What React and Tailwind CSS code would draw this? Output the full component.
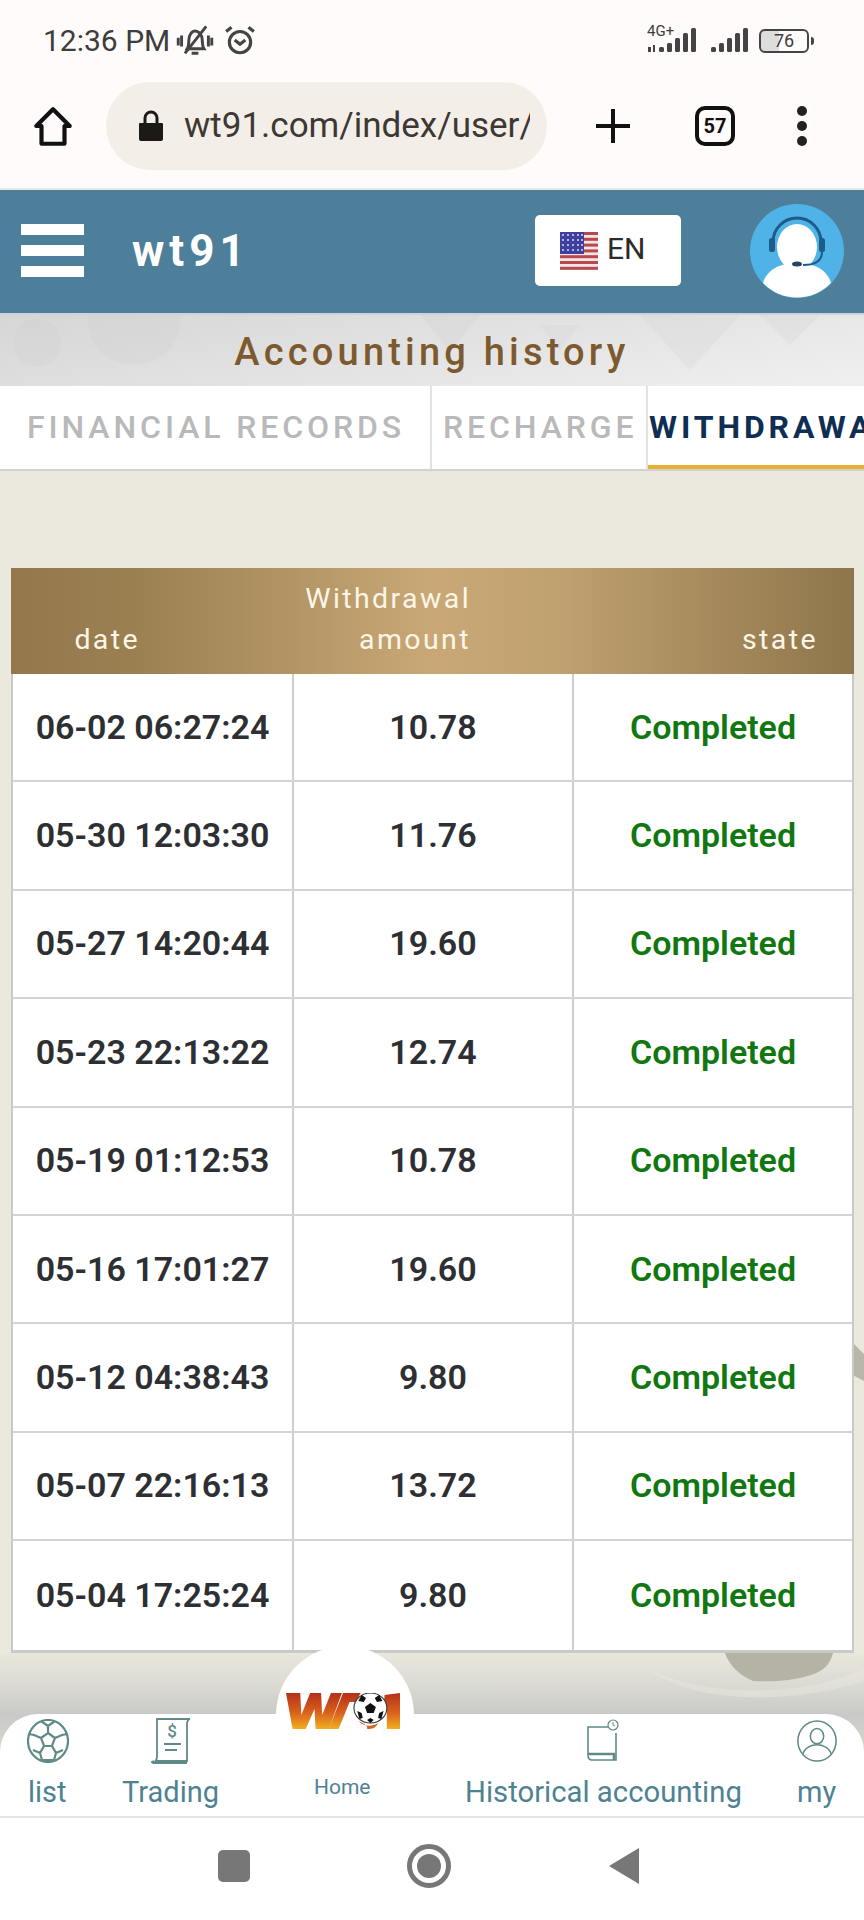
const ROWS = [
  ["06-02 06:27:24", "10.78"],
  ["05-30 12:03:30", "11.76"],
  ["05-27 14:20:44", "19.60"],
  ["05-23 22:13:22", "12.74"],
  ["05-19 01:12:53", "10.78"],
  ["05-16 17:01:27", "19.60"],
  ["05-12 04:38:43", "9.80"],
  ["05-07 22:16:13", "13.72"],
  ["05-04 17:25:24", "9.80"],
];

function StatusBar() {
  return (
    <div className="h-[60px] flex items-center justify-between pl-[43px] pr-[50px] pt-[21px] text-[#3d3d3d]">
      <div className="flex items-center">
        <span className="text-[30px] leading-none">12:36 PM</span>
        <svg width="38" height="38" viewBox="0 0 34 34" fill="none" stroke="#444" strokeWidth="2.6" className="ml-[6px]">
          <path d="M10 24c2-3 1-8 2-11 1-3 3-5 5-5s5 2 6 5c1 3 0 8 2 11z" />
          <path d="M14 28h6M8 28 27 4M2 14v7M5 12v10M32 14v7M29 12v10" />
        </svg>
        <svg width="34" height="34" viewBox="0 0 32 32" fill="none" stroke="#444" strokeWidth="3" className="ml-[9px] mb-[2px]">
          <circle cx="16" cy="18" r="10" />
          <path d="M11 16l5 4 5-4M3 8l5-4M29 8l-5-4" />
        </svg>
      </div>
      <div className="flex items-center gap-[9px]">
        <div className="relative w-[54px] h-[26px]">
          <span className="absolute left-0 top-[-4px] text-[15px] leading-none">4G+</span>
          <svg width="54" height="26" viewBox="0 0 54 26" fill="#444" className="absolute inset-0">
            <path d="M1 19h3v5H1zM6 17h2v7H6z" />
            <rect x="12" y="19" width="5" height="5" rx="1.5" />
            <rect x="20" y="15" width="5" height="9" rx="1.5" />
            <rect x="28" y="10" width="5" height="14" rx="1.5" />
            <rect x="36" y="5" width="5" height="19" rx="1.5" />
            <rect x="44" y="0" width="5" height="24" rx="1.5" />
          </svg>
        </div>
        <svg width="40" height="26" viewBox="0 0 40 26" fill="#444">
          <rect x="1" y="19" width="5" height="5" rx="1.5" />
          <rect x="9" y="15" width="5" height="9" rx="1.5" />
          <rect x="17" y="10" width="5" height="14" rx="1.5" />
          <rect x="25" y="5" width="5" height="19" rx="1.5" />
          <rect x="33" y="0" width="5" height="24" rx="1.5" />
        </svg>
        <div className="flex items-center gap-[2px]">
          <div className="w-[50px] h-[24px] rounded-[6px] border-2 border-[#444] flex items-center justify-center text-[18px] leading-none bg-[linear-gradient(90deg,#dddddd_0_40%,transparent_40%)]">76</div>
          <div className="w-[3px] h-[8px] bg-[#444] rounded-r-sm" />
        </div>
      </div>
    </div>
  );
}

function BrowserBar() {
  return (
    <div className="h-[130px] flex items-center pt-[3px] border-b-2 border-[#e6e8e4]">
      <svg width="46" height="46" viewBox="0 0 44 44" fill="none" stroke="#111" strokeWidth="4" strokeLinejoin="round" className="ml-[30px] shrink-0">
        <path d="M6 22 22 6l16 16h-5v17H11V22z" />
      </svg>
      <div className="ml-[30px] w-[441px] h-[88px] shrink-0 rounded-[44px] bg-[#f3efe8] flex items-center overflow-hidden">
        <svg width="26" height="32" viewBox="0 0 26 32" fill="#1c1a17" className="ml-[32px] shrink-0">
          <path d="M2 13h22a1 1 0 0 1 1 1v15a2 2 0 0 1-2 2H3a2 2 0 0 1-2-2V14a1 1 0 0 1 1-1z" />
          <path d="M7 13V8a6 6 0 0 1 12 0v5" fill="none" stroke="#1c1a17" strokeWidth="3" />
        </svg>
        <span className="ml-[20px] w-[346px] overflow-hidden text-[35px] leading-[44px] text-[#3d3833] whitespace-nowrap">wt91.com/index/user/</span>
      </div>
      <svg width="38" height="38" viewBox="0 0 38 38" fill="none" stroke="#111" strokeWidth="4" className="ml-[47px] shrink-0">
        <path d="M19 2v34M2 19h34" />
      </svg>
      <div className="ml-[63px] w-[40px] h-[40px] shrink-0 rounded-[10px] border-[4px] border-[#111] flex items-center justify-center text-[20px] font-bold leading-none text-[#111]">57</div>
      <div className="ml-[62px] flex flex-col gap-[5px]">
        <div className="w-[10px] h-[10px] rounded-full bg-[#222]" />
        <div className="w-[10px] h-[10px] rounded-full bg-[#222]" />
        <div className="w-[10px] h-[10px] rounded-full bg-[#222]" />
      </div>
    </div>
  );
}

function Avatar() {
  return (
    <svg width="94" height="94" viewBox="0 0 94 94">
      <circle cx="47" cy="47" r="47" fill="#4fb3e8" />
      <path d="M23 38a24 24 0 0 1 48 0" fill="none" stroke="#1d5c86" strokeWidth="3" />
      <rect x="19" y="34" width="6" height="14" rx="2.5" fill="#1d5c86" />
      <rect x="69" y="34" width="6" height="14" rx="2.5" fill="#1d5c86" />
      <ellipse cx="47" cy="43" rx="20" ry="23" fill="#fff" />
      <path d="M13 79c4-14 18-20 34-20s30 6 34 20a47 47 0 0 1-68 0z" fill="#fff" />
      <path d="M72 48c0 9-7 13-19 13" fill="none" stroke="#1d5c86" strokeWidth="2" />
      <ellipse cx="47" cy="60" rx="5" ry="2.5" fill="#24475c" />
    </svg>
  );
}

function Flag() {
  return (
    <svg width="38" height="38" viewBox="0 0 38 38">
      <rect width="38" height="38" fill="#f0e6e4" />
      {[0, 1, 2, 3, 4, 5, 6].map((i) => (
        <rect key={i} y={i * 5.8} width="38" height="3" fill="#b9474e" />
      ))}
      <rect width="24" height="22" fill="#3e3f9e" />
      {[3, 8, 13, 18, 22].map((x) =>
        [3, 8, 13, 18].map((y) => <circle key={x + "-" + y} cx={x} cy={y} r="0.9" fill="#eee" />)
      )}
    </svg>
  );
}

function Header() {
  return (
    <div className="h-[123px] bg-[#4d7f9a] flex items-center pb-[2px]">
      <div className="ml-[21px] w-[63px] flex flex-col gap-[10px] shrink-0">
        <div className="h-[11px] bg-white" />
        <div className="h-[11px] bg-white" />
        <div className="h-[11px] bg-white" />
      </div>
      <span className="ml-[48px] w-[118px] shrink-0 text-[44px] font-bold text-white tracking-[5px] leading-none">wt91</span>
      <div className="ml-[285px] w-[146px] h-[71px] shrink-0 bg-white rounded-[5px] flex items-center pl-[25px] gap-[9px]">
        <Flag />
        <span className="text-[30px] leading-none text-[#2b2b2b] mb-[4px]">EN</span>
      </div>
      <div className="ml-[69px]">
        <Avatar />
      </div>
    </div>
  );
}

function TitleStrip() {
  return (
    <div className="relative h-[73px] overflow-hidden bg-[linear-gradient(170deg,#d6d6d6_0%,#e4e4e4_55%,#f0f0f0_100%)] border-t-2 border-[#ccd3e0] flex items-center justify-center pt-[2px]">
      <svg width="864" height="72" viewBox="0 0 864 72" fill="#c8c8c8" opacity="0.16" className="absolute inset-0">
        <ellipse cx="37" cy="28" rx="24" ry="24" />
        <path d="M88 0h92c0 30-12 46-46 50C100 46 88 30 88 0z" />
        <path d="M640 0l50 55 50-55zM760 0l30 30 30-30z" />
        <path d="M420 0l30 36 30-36zM540 10l20 26 20-26z" />
      </svg>
      <span className="relative text-[38px] font-medium text-[#7d5a2e] tracking-[4.2px] leading-none">Accounting history</span>
    </div>
  );
}

function Tabs() {
  return (
    <div className="h-[85px] flex bg-white border-b-2 border-[#d2d2d0] overflow-hidden whitespace-nowrap text-[32px] font-medium tracking-[3.9px] leading-none">
      <div className="w-[432px] shrink-0 border-r-2 border-[#e2e2e0] pl-[27px] pt-[25px] text-[#b9b9b9]">FINANCIAL RECORDS</div>
      <div className="w-[216px] shrink-0 border-r-2 border-[#e2e2e0] pl-[11px] pt-[25px] text-[#b9b9b9]">RECHARGE</div>
      <div className="flex-1 pl-[1px] pt-[25px] font-bold text-[#0f2f52] border-b-[4px] border-[#e6b032]">WITHDRAWAL</div>
    </div>
  );
}

function HistoryTable() {
  return (
    <div className="mx-[11px] w-[843px]">
      <div className="h-[106px] relative bg-[linear-gradient(90deg,#94784c_0%,#9b8052_15%,#c9a876_50%,#c0a170_65%,#8e754b_100%)] text-[#fdf6e8] text-[28.5px] leading-[41px] tracking-[2.4px]">
        <div className="flex h-full items-end pb-[14px]">
          <div className="w-[129px] text-right shrink-0">date</div>
          <div className="w-[331px] text-right shrink-0">Withdrawal<br />amount</div>
          <div className="flex-1 text-right pr-[36px]">state</div>
        </div>
      </div>
      <div className="border-l-2 border-r-2 border-b-[3px] border-[#c9c9c7] bg-white">
        {ROWS.map(([date, amount], i) => (
          <div key={i} className="h-[108.4px] flex items-center border-b-2 last:border-b-0 border-[#d4d4d2] text-[34px] font-semibold">
            <div className="w-[281px] h-full border-r-2 border-[#cfcfcd] flex items-center justify-center text-[#2d2f33]">{date}</div>
            <div className="w-[280px] h-full border-r-2 border-[#cfcfcd] flex items-center justify-center text-[#2d2f33]">{amount}</div>
            <div className="flex-1 h-full flex items-center justify-center text-[#117711]">Completed</div>
          </div>
        ))}
      </div>
    </div>
  );
}

function NavLabel({ children, className }) {
  return <span className={"text-[#4e8292] leading-none whitespace-nowrap " + className}>{children}</span>;
}

function BottomNav() {
  return (
    <div className="relative h-[104px] bg-white rounded-t-[38px] border-b-2 border-[#e4e4e4]">
      {/* logo hump */}
      <div className="absolute left-[276px] top-[-68px] w-[138px] h-[138px] rounded-full bg-white" />
      <svg width="114" height="36" viewBox="6 2 104 36" preserveAspectRatio="none" className="absolute left-[286px] top-[-21px]">
        <defs>
          <linearGradient id="wg" x1="0" y1="0" x2="0" y2="1">
            <stop offset="0" stopColor="#b5301a" />
            <stop offset="0.55" stopColor="#d9621c" />
            <stop offset="1" stopColor="#f0b020" />
          </linearGradient>
        </defs>
        <path d="M6 2h13l1 22 8-22h10l1 22 8-22h10L45 38H33l-1-20-8 20H12zM58 2h16l-4 9h-6l-10 27h-9zM96 4l14-2v36H98V13l-3 1z" fill="url(#wg)" />
        <path d="M72 30c6 6 12 6 18 2-2 5-5 6-10 6 1-3-2-5-8-8z" fill="#d9621c" />
        <circle cx="83" cy="17" r="15" fill="#fff" stroke="#333" strokeWidth="1" />
        <path d="M83 12l5 4-2 6h-6l-2-6zM75 4l4 3-2 4-5-1zM91 4l-4 3 2 4 5-1zM71 20l4 2 1 5-3 1zM95 20l-4 2-1 5 3 1zM80 29l3-2 3 2-3 3z" fill="#111" />
      </svg>

      {/* list */}
      <svg width="42" height="44" viewBox="0 0 42 44" fill="none" stroke="#5f8a86" strokeWidth="2.2" className="absolute left-[27px] top-[5px]">
        <ellipse cx="21" cy="22" rx="20" ry="21" />
        <path d="M21 14l7 5-3 8h-8l-3-8zM21 14V7l-7-5M21 7l7-5M28 19l7-3 5-1M14 19l-7-3-5-1M25 27l4 7-2 7M17 27l-4 7 2 7M13 34l-7-3M29 34l7-3M15 41h12" />
      </svg>
      <NavLabel className="absolute left-[28px] top-[64px] text-[29px]">list</NavLabel>

      {/* trading */}
      <svg width="42" height="46" viewBox="0 0 42 46" fill="none" stroke="#5f8a86" strokeWidth="1.8" className="absolute left-[150px] top-[4px]">
        <path d="M7 1h33c-3 1-3 3-3 5v37H5c2-1 2-3 2-5z" />
        <path d="M2 43c1 2 2 2 4 2h31" strokeWidth="3" />
        <path d="M14 26h17M15 32h12" strokeWidth="2" />
        <text x="22" y="19" fontSize="17" fontWeight="500" fill="#5f8a86" stroke="none" textAnchor="middle" fontFamily="Roboto, sans-serif">$</text>
      </svg>
      <NavLabel className="absolute left-[122px] top-[64px] text-[29px]">Trading</NavLabel>

      <NavLabel className="absolute left-[314px] top-[63px] text-[21px]">Home</NavLabel>

      {/* historical accounting */}
      <svg width="38" height="44" viewBox="0 0 38 44" fill="none" stroke="#5f8a86" strokeWidth="1.6" className="absolute left-[584px] top-[5px]">
        <path d="M24 8H4v28c0 3 1 5 4 5h24V14" />
        <path d="M4 35h26v6" strokeWidth="2.5" />
        <circle cx="29" cy="6" r="5" strokeWidth="1.2" />
        <path d="M29 3v3l2 1" strokeWidth="1" />
      </svg>
      <NavLabel className="absolute left-[465px] top-[64px] text-[29.3px]">Historical accounting</NavLabel>

      {/* my */}
      <svg width="42" height="42" viewBox="0 0 42 44" fill="none" stroke="#5f8a86" strokeWidth="1.6" className="absolute left-[796px] top-[6px]">
        <ellipse cx="21" cy="22" rx="20" ry="21" />
        <ellipse cx="21" cy="17" rx="7" ry="8" />
        <path d="M6 36c2-7 9-10 15-10s13 3 15 10" />
      </svg>
      <NavLabel className="absolute left-[797px] top-[64px] text-[29px]">my</NavLabel>
    </div>
  );
}

function BottomArea() {
  return (
    <div className="relative bg-[linear-gradient(180deg,#e9e6dc_0px,#dddcd4_28px,#c9c9c7_61px,#d8d6cc_100px,#e2dfd4_165px)]">
      <svg width="864" height="61" viewBox="0 0 864 61" className="absolute inset-0">
        <path d="M640 10c40 30 150 40 224 6v12c-80 26-180 22-224-18z" fill="#e6e4db" opacity="0.6" />
        <path d="M725 0h108c-3 12-10 18-22 22-18 6-40 7-58 6-14-6-24-16-28-28z" fill="#b5b2a6" />
      </svg>
      <div className="h-[61px]" />
      <BottomNav />
    </div>
  );
}

export default function App() {
  return (
    <div className="w-[864px] h-[1920px] overflow-hidden bg-[#fefbfa] font-['Roboto',sans-serif] flex flex-col">
      <StatusBar />
      <BrowserBar />
      <Header />
      <TitleStrip />
      <Tabs />
      <div className="relative bg-[#ebe8de] pt-[97px]">
        <HistoryTable />
        <div className="absolute right-0 top-[873px] w-[10px] h-[37px] bg-[#b9b6aa] [clip-path:polygon(0_0,100%_27%,100%_100%,0_86%)]" />
      </div>
      <BottomArea />
      <div className="flex-1 bg-white flex items-center pb-[6px]">
        <div className="ml-[218px] w-[32px] h-[32px] rounded-[5px] bg-[#777]" />
        <div className="ml-[157px] w-[44px] h-[44px] rounded-full border-[5px] border-[#777] flex items-center justify-center">
          <div className="w-[24px] h-[24px] rounded-full bg-[#777]" />
        </div>
        <svg width="32" height="38" viewBox="0 0 32 38" fill="#777" className="ml-[157px]">
          <path d="M31 1v36L1 19z" />
        </svg>
      </div>
    </div>
  );
}
